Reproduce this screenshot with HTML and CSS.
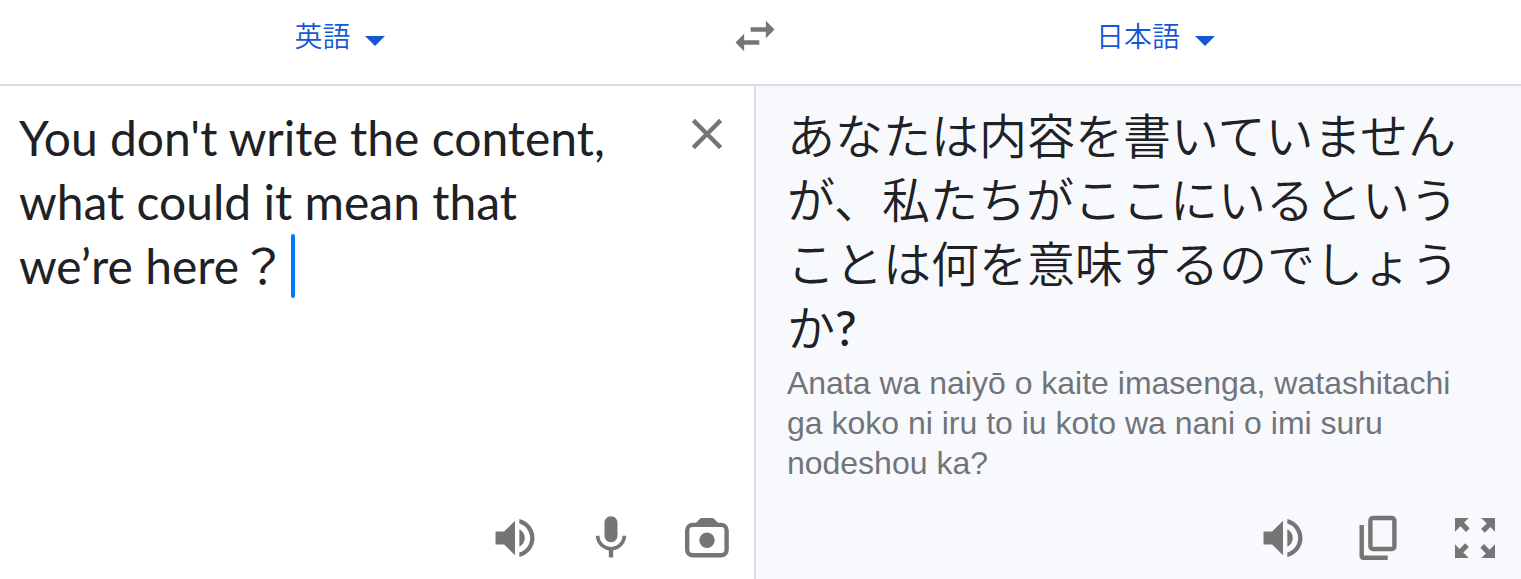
FILE: index.html
```html
<!DOCTYPE html>
<html lang="ja">
<head>
    <meta charset="UTF-8">
    <meta name="viewport" content="width=device-width, initial-scale=1.0">
    <title>翻訳</title>
    <link rel="stylesheet" href="styles.css">
</head>
<body>
    <header class="lang-bar">
        <div class="lang lang-source">
            <select id="sourceLang" name="sourceLang" aria-label="翻訳元の言語">
                <option>英語</option>
            </select>
            <svg class="arrow" viewBox="0 0 20 10"><path d="M0 0h20L10 10z"/></svg>
        </div>
        <button type="button" class="icon-btn" aria-label="言語を入れ替える">
            <svg viewBox="0 0 24 24"><path d="M6.99 11L3 15l3.99 4v-3H14v-2H6.99v-3zM21 9l-3.99-4v3H10v2h7.01v3L21 9z"/></svg>
        </button>
        <div class="lang lang-target">
            <select id="targetLang" name="targetLang" aria-label="翻訳先の言語">
                <option>日本語</option>
            </select>
            <svg class="arrow" viewBox="0 0 20 10"><path d="M0 0h20L10 10z"/></svg>
        </div>
    </header>

    <main class="panels">
        <section class="panel source">
            <div class="source-row">
                <div class="source-box">
                    <textarea id="sourceText" name="sourceText" rows="3" lang="en" aria-label="原文" spellcheck="false">You don't write the content, what could it mean that we’re here？</textarea>
                    <span class="caret"></span>
                </div>
                <button type="button" class="icon-btn" aria-label="クリア">
                    <svg viewBox="0 0 24 24"><path d="M19 6.41L17.59 5 12 10.59 6.41 5 5 6.41 10.59 12 5 17.59 6.41 19 12 13.41 17.59 19 19 17.59 13.41 12z"/></svg>
                </button>
            </div>
            <div class="tools">
                <button type="button" class="icon-btn" aria-label="音声を聞く">
                    <svg viewBox="0 0 24 24"><path d="M3 9v6h4l5 5V4L7 9H3zm13.5 3c0-1.77-1.02-3.29-2.5-4.03v8.05c1.48-.73 2.5-2.25 2.5-4.02zM14 3.23v2.06c2.89.86 5 3.54 5 6.71s-2.11 5.85-5 6.71v2.06c4.01-.91 7-4.49 7-8.77s-2.99-7.86-7-8.77z"/></svg>
                </button>
                <button type="button" class="icon-btn" aria-label="音声入力">
                    <svg viewBox="0 0 24 24"><path d="M12 14c1.66 0 2.99-1.34 2.99-3L15 5c0-1.66-1.34-3-3-3S9 3.34 9 5v6c0 1.66 1.34 3 3 3zm5.3-3c0 3-2.54 5.1-5.3 5.1S6.7 14 6.7 11H5c0 3.41 2.72 6.23 6 6.72V21h2v-3.28c3.28-.48 6-3.3 6-6.72h-1.7z"/></svg>
                </button>
                <button type="button" class="icon-btn" aria-label="カメラ">
                    <svg viewBox="0 0 52 52">
                        <rect class="line" x="6.2" y="12.9" width="39.4" height="30.4" rx="5.5"/>
                        <path d="M14 12l4.5-4.8Q19.5 6 21 6h10q1.5 0 2.5 1.2L38 12z"/>
                        <circle cx="26" cy="28.3" r="7.7"/>
                    </svg>
                </button>
            </div>
        </section>

        <section class="panel target">
            <div class="result">
                <p class="translation">あなたは内容を書いていませんが、私たちがここにいるということは何を意味するのでしょうか<span class="mark">?</span></p>
                <p class="romaji">Anata wa naiyō o kaite imasenga, watashitachi ga koko ni iru to iu koto wa nani o imi suru nodeshou ka?</p>
            </div>
            <div class="tools">
                <button type="button" class="icon-btn" aria-label="音声を聞く">
                    <svg viewBox="0 0 24 24"><path d="M3 9v6h4l5 5V4L7 9H3zm13.5 3c0-1.77-1.02-3.29-2.5-4.03v8.05c1.48-.73 2.5-2.25 2.5-4.02zM14 3.23v2.06c2.89.86 5 3.54 5 6.71s-2.11 5.85-5 6.71v2.06c4.01-.91 7-4.49 7-8.77s-2.99-7.86-7-8.77z"/></svg>
                </button>
                <button type="button" class="icon-btn" aria-label="コピー">
                    <svg viewBox="0 0 52 52">
                        <rect class="line" x="17.4" y="6" width="24" height="31" rx="2.5"/>
                        <path class="line" d="M8.7 13v30.7q0 2 2 2h24"/>
                    </svg>
                </button>
                <button type="button" class="icon-btn" aria-label="全画面表示">
                    <svg viewBox="0 0 52 52">
                        <path id="corner" d="M6 6h13.7l-4.6 4.6 5.6 5.6-3.7 3.7-5.6-5.6L6 19.7z"/>
                        <use href="#corner" transform="rotate(90 26 26)"/>
                        <use href="#corner" transform="rotate(180 26 26)"/>
                        <use href="#corner" transform="rotate(270 26 26)"/>
                    </svg>
                </button>
            </div>
        </section>
    </main>
</body>
</html>
```

FILE: styles.css
```css
* {
    box-sizing: border-box;
}

body {
    margin: 0;
    min-height: 100vh;
    display: flex;
    flex-direction: column;
    background-color: #fff;
    color: #202124;
    font-family: "Liberation Sans", "Noto Sans CJK JP", sans-serif;
}

.lang-bar {
    display: flex;
    padding: 10px 0 22px;
    border-bottom: 2px solid #dadce0;
}

.lang-bar .icon-btn {
    margin: 0 49px;
}

.lang {
    display: flex;
    align-items: center;
    justify-content: center;
    gap: 14px;
}

.lang-source {
    width: 44.7%;
}

.lang-target {
    flex: 1;
    padding-right: 40px;
}

.lang select {
    appearance: none;
    border: none;
    padding: 0 0 2px;
    background: none;
    color: #1558d6;
    font-family: "Noto Sans CJK JP", sans-serif;
    font-size: 28px;
    font-weight: 350;
    line-height: 40px;
    cursor: pointer;
}

.arrow {
    width: 20px;
    height: 10px;
    margin-top: 9px;
    fill: #1558d6;
    pointer-events: none;
}

.icon-btn {
    flex: none;
    width: 52px;
    height: 52px;
    padding: 0;
    border: none;
    background: none;
    cursor: pointer;
}

.icon-btn svg {
    display: block;
    width: 52px;
    height: 52px;
    fill: #757575;
}

.icon-btn .line {
    fill: none;
    stroke: #757575;
    stroke-width: 4.4;
}

.panels {
    flex: 1;
    display: grid;
    grid-template-columns: 49.7% 1fr;
}

.panel {
    display: flex;
    flex-direction: column;
    justify-content: space-between;
}

.source {
    border-right: 2px solid #dadce0;
}

.target {
    background-color: #f8f9fc;
}

.source-row {
    display: flex;
    justify-content: space-between;
    gap: 60px;
    padding: 20px 21px 0 19px;
}

.source-row .icon-btn {
    margin-top: 2px;
}

.source-box {
    position: relative;
    flex: 1;
}

.source-box textarea {
    display: block;
    width: 100%;
    padding: 0;
    border: none;
    outline: none;
    resize: none;
    overflow: hidden;
    background: none;
    color: #202124;
    font-family: Lato, "Noto Sans CJK JP", sans-serif;
    font-size: 48px;
    line-height: 64px;
}

/* text cursor at the end of the last line */
.caret {
    position: absolute;
    left: 272px;
    bottom: 0;
    width: 4px;
    height: 64px;
    border-radius: 2px;
    background-color: #007aff;
}

.result {
    padding: 18px 31px 0;
}

.result p {
    margin: 0;
}

.translation {
    font-family: Lato, "Noto Sans CJK JP", sans-serif;
    font-size: 48px;
    font-weight: 350;
    line-height: 64px;
}

.mark {
    font-weight: 500;
}

.result .romaji {
    margin-top: 3px;
    color: #70757a;
    font-size: 32px;
    line-height: 40px;
}

.tools {
    display: flex;
    justify-content: flex-end;
    gap: 44px;
    padding: 15px 20px;
}

.source .tools {
    padding-right: 21px;
}
```
